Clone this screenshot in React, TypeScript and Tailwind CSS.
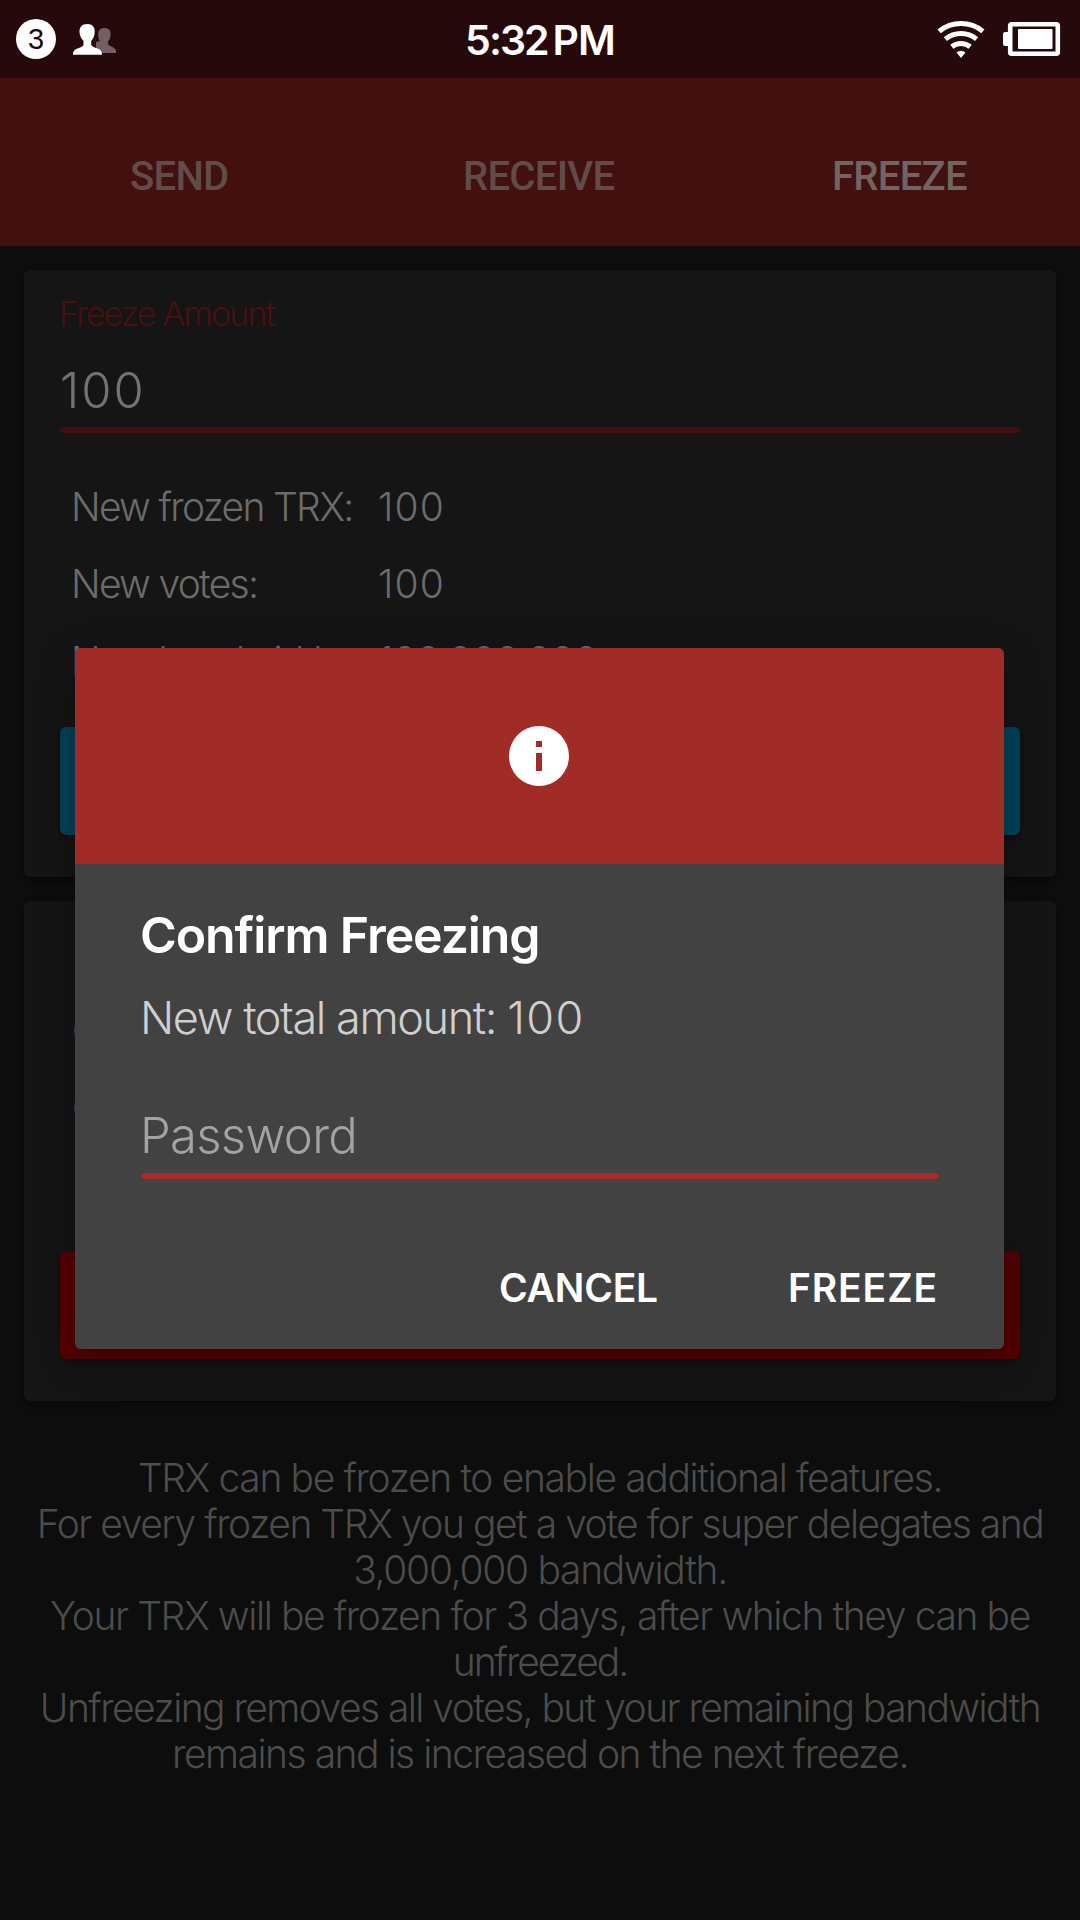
import type { ReactNode } from "react";

function PeopleIcon() {
  return (
    <svg className="ml-[16px] h-[34px] w-[46px]" viewBox="72 22 46 34">
      <path
        fill="#735f61"
        d="M104.600 28c4 0 6 2.300 6 5.700 0 3.300-.7 5.800-2.600 7.800v2.700c1.200 2.200 8 3.100 8 6.600v2.200H96V42l3.800-1c-1.300-2-1.600-4.600-1.600-7.300 0-3.400 2.400-5.700 6.400-5.700Z"
      />
      <path
        fill="#fff"
        d="M87.200 24c5.400 0 7.700 3.300 7.500 8-.2 3.900-1.200 6.500-3.500 8.900v4c.6 1.600 3.600 2.500 6.300 3.600 3.300 1.300 4.500 2.900 4.500 6.300H73c0-3.400 1.200-5 4.500-6.300 2.700-1.100 5.600-2 6-3.600v-4c-2.300-2.400-3.800-5-4-8.900-.2-4.700 2.300-8 7.700-8Z"
      />
    </svg>
  );
}

function WifiIcon() {
  return (
    <svg className="h-[40px] w-[48px]" viewBox="937 18 48 40" fill="none" stroke="#fff" strokeWidth="5">
      <path d="M939.100 30.400A34.500 34.500 0 0 1 982.900 30.400" />
      <path d="M945.400 38.100A24.500 24.500 0 0 1 976.600 38.100" />
      <path d="M951.800 45.800A14.500 14.500 0 0 1 970.200 45.800" />
      <path stroke="none" fill="#fff" d="M961 57 956.500 51.400A7.500 7.500 0 0 1 965.500 51.400Z" />
    </svg>
  );
}

function BatteryIcon() {
  return (
    <svg className="ml-[17px] h-[36px] w-[60px]" viewBox="1002 21 60 36">
      <rect x="1003" y="32" width="8" height="14" rx="2" fill="#fff" />
      <rect x="1010.200" y="24.200" width="47.600" height="29.600" rx="1.500" fill="#26090b" stroke="#fff" strokeWidth="4.600" />
      <rect x="1018" y="29" width="34.500" height="20" rx="1" fill="#fff" />
    </svg>
  );
}

function InfoIcon() {
  return (
    <svg className="mr-[1px] h-[60px] w-[60px]" viewBox="0 0 60 60">
      <circle cx="30" cy="30" r="30" fill="#fff" />
      <rect x="27" y="15" width="6" height="6" fill="#a12b27" />
      <rect x="27" y="27" width="6" height="18" fill="#a12b27" />
    </svg>
  );
}

function Card({ className, children }: { className: string; children: ReactNode }) {
  return (
    <section className={`mx-[24px] rounded-[6px] bg-[#151515] px-[36px] shadow-[0_3px_6px_rgba(0,0,0,0.4)] ${className}`}>
      {children}
    </section>
  );
}

function Row({ label, value, wide = false }: { label: string; value?: string; wide?: boolean }) {
  return (
    <div className="flex h-[77px] items-center pl-[11px] text-[39px] font-light text-[#6c6c6c]">
      <span className="w-[307px] shrink-0 tracking-[-1.700px]">{label}</span>
      <span className={wide ? "tracking-[-0.600px]" : "tracking-[1.100px]"}>{value}</span>
    </div>
  );
}

const notes: [string, string][] = [
  ["TRX can be frozen to enable additional features.", "tracking-[-1.370px]"],
  ["For every frozen TRX you get a vote for super delegates and", "tracking-[-1.470px]"],
  ["3,000,000 bandwidth.", "tracking-[-1.300px]"],
  ["Your TRX will be frozen for 3 days, after which they can be", "tracking-[-1.400px]"],
  ["unfreezed.", "tracking-[-2.050px]"],
  ["Unfreezing removes all votes, but your remaining bandwidth", "tracking-[-1.560px]"],
  ["remains and is increased on the next freeze.", "tracking-[-1.500px]"],
];

export default function App() {
  return (
    <div className="relative h-[1920px] w-[1080px] overflow-hidden bg-[#0d0d0d] font-[Inter,sans-serif]">
      <header className="grid h-[78px] grid-cols-3 items-center bg-[#26090b] text-white">
        <div className="flex items-center pl-[16px]">
          <div className="flex size-[40px] items-center justify-center rounded-full bg-white font-['Liberation_Sans',sans-serif] text-[29px] leading-none text-[#26090b]">
            3
          </div>
          <PeopleIcon />
        </div>
        <div className="flex justify-center pt-[2px] text-[41px] leading-none font-semibold">
          <span className="tracking-[-2px]">5:32</span>
          <span className="ml-[5px] tracking-[-1px]">PM</span>
        </div>
        <div className="flex items-center justify-end pr-[18px]">
          <WifiIcon />
          <BatteryIcon />
        </div>
      </header>

      <nav className="flex h-[168px] bg-[#41100f] pt-[75px] pl-[130px] font-[Roboto,sans-serif] text-[40px] leading-[48px] font-medium tracking-[-0.700px] text-[#614c4a]">
        <span className="w-[333px]">SEND</span>
        <span className="w-[369px]">RECEIVE</span>
        <span className="text-[#716462]">FREEZE</span>
      </nav>

      <Card className="mt-[24px] h-[607px]">
        <div className="-ml-px pt-[23px] text-[34px] leading-[42px] font-light tracking-[-1.900px] text-[#49100f]">Freeze Amount</div>
        <div className="mt-[26px] h-[66px] text-[49px] leading-[60px] font-light tracking-[2px] text-[#737373]">100</div>
        <div className="h-[6px] rounded-sm bg-[#42110f]" />
        <div className="pt-[36px]">
          <Row label="New frozen TRX:" value="100" />
          <Row label="New votes:" value="100" />
          <Row label="New bandwidth:" value="100,000,000" wide />
        </div>
        <div className="mt-[27px] h-[108px] rounded-[6px] bg-[#004259] shadow-[0_3px_6px_rgba(0,0,0,0.4)]" />
      </Card>

      <Card className="mt-[24px] h-[500px] pt-[15px] pl-[37px]">
        <Row label="Frozen TRX:" />
        <Row label="Current votes:" />
        <Row label="Current BW:" />
        <Row label="Expires:" />
        <div className="mt-[27px] -ml-px h-[108px] rounded-[6px] bg-[#540000] shadow-[0_3px_6px_rgba(0,0,0,0.4)]" />
      </Card>

      <div className="mt-[54px] text-center text-[39px] leading-[46px] font-light whitespace-nowrap text-[#4c4c4c]">
        {notes.map(([line, tracking]) => (
          <p key={line} className={tracking}>
            {line}
          </p>
        ))}
      </div>

      <div
        role="dialog"
        className="absolute top-[648px] left-[75px] flex h-[701px] w-[929px] flex-col overflow-hidden rounded-[6px] bg-[#424242] shadow-[0_10px_40px_rgba(0,0,0,0.3)]"
      >
        <div className="flex h-[216px] items-center justify-center bg-[#a12b27]">
          <InfoIcon />
        </div>
        <div className="px-[65px]">
          <h1 className="pt-[41px] text-[50px] leading-[60px] font-semibold tracking-[-1.100px] text-white">Confirm Freezing</h1>
          <p className="mt-[26px] text-[45px] leading-[54px] font-light tracking-[-1.400px] text-[#cfcfcf]">
            New total amount: <span className="tracking-[1.300px]">100</span>
          </p>
          <div className="mt-[61px] h-[67px] text-[49px] leading-[60px] font-light tracking-[-0.700px] text-[#a3a3a3]">Password</div>
          <div className="ml-px h-[6px] rounded-sm bg-[#a62b28]" />
        </div>
        <div className="flex justify-end pt-[85px] pr-[66px] text-[39px] leading-[48px] font-semibold text-white">
          <span className="tracking-[-0.200px]">CANCEL</span>
          <span className="ml-[130px] tracking-[0.900px]">FREEZE</span>
        </div>
      </div>
    </div>
  );
}
